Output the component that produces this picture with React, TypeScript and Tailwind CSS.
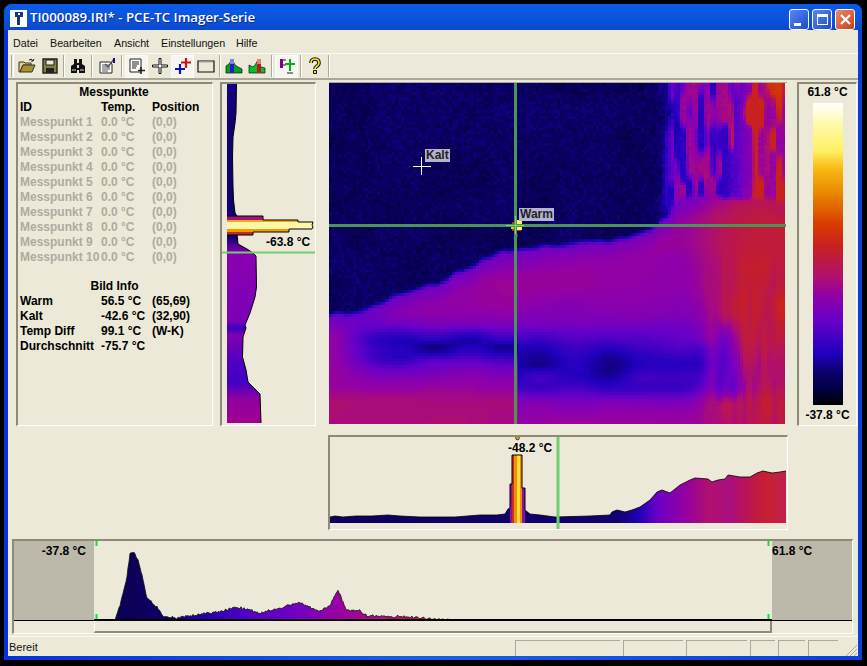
import type { ReactNode } from 'react';

// thermal palette, read off the colour bar (0 = coldest, 1 = hottest)
const STOPS: [number, number, number, number][] = [
  [0, 0, 0, 0],
  [0.05, 0, 0, 40],
  [0.1, 10, 0, 100],
  [0.17, 32, 0, 190],
  [0.28, 104, 0, 200],
  [0.36, 144, 0, 168],
  [0.425, 176, 16, 108],
  [0.525, 200, 32, 32],
  [0.6, 216, 60, 0],
  [0.7, 232, 136, 0],
  [0.78, 248, 184, 16],
  [0.84, 255, 240, 96],
  [0.93, 255, 250, 170],
  [1, 255, 255, 255],
];

function paletteColor(v: number) {
  const t = Math.min(1, Math.max(0, v));
  for (let i = 1; i < STOPS.length; i++) {
    if (t <= STOPS[i][0]) {
      const a = STOPS[i - 1];
      const b = STOPS[i];
      const k = (t - a[0]) / (b[0] - a[0]);
      const c = [1, 2, 3].map((j) => Math.round(a[j] + (b[j] - a[j]) * k));
      return `rgb(${c[0]},${c[1]},${c[2]})`;
    }
  }
  return '#fff';
}

function hash(x: number, y: number) {
  const s = Math.sin(x * 127.1 + y * 311.7) * 43758.5453;
  return s - Math.floor(s);
}

function smooth(a: number, b: number, x: number) {
  const t = Math.min(1, Math.max(0, (x - a) / (b - a)));
  return t * t * (3 - 2 * t);
}

function noise(x: number, y: number) {
  const ix = Math.floor(x);
  const iy = Math.floor(y);
  const fx = smooth(0, 1, x - ix);
  const fy = smooth(0, 1, y - iy);
  const top = hash(ix, iy) * (1 - fx) + hash(ix + 1, iy) * fx;
  const bottom = hash(ix, iy + 1) * (1 - fx) + hash(ix + 1, iy + 1) * fx;
  return top * (1 - fy) + bottom * fy;
}

function interp(points: number[][], x: number) {
  if (x <= points[0][0]) return points[0][1];
  for (let i = 1; i < points.length; i++) {
    if (x <= points[i][0]) {
      const [x0, y0] = points[i - 1];
      const [x1, y1] = points[i];
      return y0 + ((y1 - y0) * (x - x0)) / (x1 - x0);
    }
  }
  return points[points.length - 1][1];
}

const GROUND = [
  [0, 231], [35, 229], [66, 213], [110, 199], [150, 180], [173, 167], [233, 161], [285, 157], [323, 147], [340, 132], [350, 115], [380, 112], [457, 118],
];

function field(x: number, y: number) {
  const edge = interp(GROUND, x) + (noise(x / 9, 3) - 0.5) * 4;
  const sky = 0.095 + (hash(x, y) - 0.5) * 0.03 + (noise(x / 30, y / 30) - 0.5) * 0.02;
  let ground = 0.365 + (noise(x / 60, y / 20) - 0.5) * 0.03;

  // cold band running through the middle of the ground
  const left = x < 190;
  const bandY = left ? 264 : 282;
  const bandH = left ? 22 : 40;
  const bandX = smooth(0, 50, x) * (1 - smooth(365, 400, x));
  ground -= (left ? 0.2 : 0.2) * bandX * Math.exp(-((y - bandY) ** 2) / (bandH * bandH)) * (0.75 + 0.5 * noise(x / 35, y / 14));
  ground -= 0.06 * (1 - smooth(edge, edge + 26, y));
  ground += 0.045 * smooth(300, 320, y);

  // warm wall on the right, hottest around the ledge
  const wall = smooth(345, 425, x) * (1 - 0.6 * smooth(230, 300, y));
  const streak = noise(x / 5, y / 45);
  ground += wall * 0.13 + smooth(370, 400, x) * (streak - 0.5) * 0.09 * smooth(150, 220, y);
  ground -= 0.12 * smooth(382, 392, x) * (1 - smooth(402, 420, x)) * smooth(225, 260, y) * (1 - smooth(305, 325, y));

  let up = sky;
  if (x > 325) {
    const w = smooth(325, 355, x);
    const s = noise(x / 6, y / 28);
    up = sky + w * (0.09 + 0.2 * smooth(0.35, 0.75, s)) + smooth(390, 430, x) * (0.18 + 0.05 * s);
    up = Math.min(up, 0.53);
    up += smooth(425, 450, x) * (1 - smooth(5, 35, y)) * 0.05;
  }

  const mix = smooth(edge - 4, edge + 4, y);
  return up * (1 - mix) + ground * mix;
}

function buildHeatmap() {
  const levels = new Map<string, string[]>();
  for (let py = 0; py < 114; py++) {
    for (let px = 0; px < 152; px++) {
      const v = Math.round(field(px * 3 + 1, py * 3 + 1) * 110) / 110;
      const key = paletteColor(v);
      const list = levels.get(key) ?? [];
      list.push(`M${px * 3} ${py * 3}h3v3h-3z`);
      levels.set(key, list);
    }
  }
  return [...levels.entries()].map(([color, parts]) => ({ color, d: parts.join('') }));
}

const HEATMAP = buildHeatmap();

const toPath = (pts: number[][]) => pts.map((p, i) => `${i ? 'L' : 'M'}${p[0]} ${p[1]}`).join(' ');

// vertical profile, page coordinates
const V_PROFILE = [
  [236.5, 84], [236, 113], [235, 123], [233, 137], [232.5, 157], [233, 187], [233.5, 200], [235, 213], [237, 216], [237, 234], [238, 244], [247, 249], [253, 253], [256, 256], [256.5, 287], [255, 297], [250, 313], [245, 325], [246, 328], [243, 337], [242.5, 357], [246, 370], [248, 382], [260, 394], [261, 423],
];

const H_TOP = [
  [330, 517], [335, 516], [343, 517], [356, 516], [372, 516], [388, 515], [400, 516], [420, 517], [455, 517], [480, 515], [497, 515], [505, 514], [508, 509], [510, 508], [525, 510], [530, 514], [540, 515], [555, 517], [590, 516], [610, 515], [612, 512], [617, 510], [625, 512], [632, 510], [640, 507], [650, 500], [657, 492], [662, 490], [670, 493], [680, 485], [690, 480], [695, 478], [708, 479], [712, 482], [718, 480], [725, 479], [728, 475], [740, 477], [750, 477], [757, 473], [763, 471], [772, 473], [780, 472], [786, 471],
];

function jagged(points: number[][], x0: number, x1: number, amp: number) {
  const out: number[][] = [];
  for (let x = x0; x <= x1; x++) {
    out.push([x, interp(points, x) + (hash(x, 7) - 0.5) * amp * (x < 118 ? 0 : 1)]);
  }
  return out;
}

const HIST = jagged(
  [[115, 620], [120, 605], [127, 577], [130, 553], [134, 553], [138, 560], [142, 575], [147, 598], [157, 607], [163, 616], [177, 618], [200, 614], [220, 612], [237, 607], [250, 610], [260, 613], [283, 607], [300, 603], [320, 611], [330, 605], [338, 590], [346, 610], [360, 611], [367, 616], [387, 616], [390, 617], [400, 616], [430, 619], [450, 620]],
  115,
  450,
  2.4,
);

function Sunken({ className, children }: { className: string; children?: ReactNode }) {
  return (
    <div className={`relative border-t-2 border-l-2 border-r border-b border-t-[#8d8a78] border-l-[#8d8a78] border-r-white border-b-white ${className}`}>
      {children}
    </div>
  );
}

function ToolButton({ pressed, children }: { pressed?: boolean; children: ReactNode }) {
  return (
    <div className={`flex h-[23px] w-[23px] items-center justify-center ${pressed ? 'border border-[#fbfaf5] bg-[#f6f5ef]' : ''}`}>
      <svg width="18" height="18" viewBox="0 0 18 18">{children}</svg>
    </div>
  );
}

const Sep = ({ w = 'w-[7px]' }: { w?: string }) => (
  <div className={`flex h-[22px] justify-center ${w}`}>
    <div className="h-full w-[2px] border-l border-r border-l-[#aca899] border-r-white" />
  </div>
);

const ROWS = ['1', '2', '3', '4', '5', '6', '7', '8', '9', '10'];

const INFO = [
  ['Warm', '56.5 °C', '(65,69)'],
  ['Kalt', '-42.6 °C', '(32,90)'],
  ['Temp Diff', '99.1 °C', '(W-K)'],
  ['Durchschnitt', '-75.7 °C', ''],
];

function Toolbar() {
  return (
    <div className="flex h-[26px] items-center border-b-2 border-b-[#aca899] pl-[3px]">
      <div className="mr-[1px] h-[22px] w-[3px] border-l border-r border-l-[#aca899] border-r-white" />
      <ToolButton>
        <path d="M1 5h5l1 1h6v2H5L2 15H1z" fill="#e8d070" stroke="#333" />
        <path d="M5 8h12l-3 7H2z" fill="#a89030" stroke="#333" />
        <path d="M11 3q3-2 4 1m0 0l-2 0m2 0l1-2" fill="none" stroke="#111" />
      </ToolButton>
      <ToolButton>
        <path d="M2 2h14v14H2z" fill="#808040" stroke="#222" strokeWidth="1.400" />
        <path d="M5 3h8v5H5z" fill="#ece9d8" stroke="#222" />
        <path d="M5 11h8v5H5z" fill="#222" />
      </ToolButton>
      <Sep w="w-[5px]" />
      <ToolButton>
        <path d="M5 2h3v4h2V2h3v5l3 2v7h-6v-3H8v3H2V9l3-2z" fill="#111" />
        <path d="M3 13h4M11 13h4" stroke="#ddd" />
        <path d="M8 8h2v3H8z" fill="#ddd" />
      </ToolButton>
      <Sep w="w-[6px]" />
      <ToolButton>
        <path d="M2 5h10l2 2v9H2z" fill="#fff" stroke="#222" />
        <path d="M4 8h7M4 10h8M4 12h8M4 14h6" stroke="#555" />
        <path d="M7 7l3 3 6-8" fill="none" stroke="#555" strokeWidth="1.400" />
        <path d="M15 1h2v5h-2z" fill="#101080" />
      </ToolButton>
      <Sep />
      <ToolButton pressed>
        <path d="M2 2h11v13H2z" fill="#fff" stroke="#222" />
        <path d="M4 5h7M4 7h7M4 9h5M4 11h4" stroke="#222" />
        <path d="M13 10v7M10 13.500h7" stroke="#222" strokeWidth="1.600" />
      </ToolButton>
      <ToolButton>
        <path d="M8 1.500h2v6.500h6.500v2H10v6.500H8V10H1.500V8H8z" fill="#fff" stroke="#111" strokeWidth="1" />
      </ToolButton>
      <ToolButton pressed>
        <path d="M12 1v10M7 5.500h10" stroke="#d01010" strokeWidth="2.200" />
        <path d="M6 7v10M1 12h10" stroke="#1010b0" strokeWidth="2.200" />
      </ToolButton>
      <ToolButton>
        <path d="M1 4h16v11H1z" fill="#ece9d8" stroke="#111" strokeWidth="1.200" />
        <path d="M2 5h14" stroke="#aaa" />
      </ToolButton>
      <Sep w="w-[5px]" />
      <ToolButton>
        <path d="M1 16V9l3-2 3-5 3 6 3 2 4 2v4z" fill="#00a020" stroke="#111" strokeWidth="0.700" />
        <path d="M5 16V4h4v12z" fill="#2020c0" />
        <path d="M5 2h4v5H5z" fill="#8080d8" />
      </ToolButton>
      <ToolButton>
        <path d="M1 16V8l4 2 2-2 3-5 3 7 4 1v5z" fill="#00c030" stroke="#111" strokeWidth="0.700" />
        <path d="M9 16V4h4v12z" fill="#c01818" />
        <path d="M9 2h4v5H9z" fill="#e08080" />
      </ToolButton>
      <Sep />
      <ToolButton pressed>
        <path d="M2 2h3v9H2z" fill="#800080" />
        <path d="M5 3h3M5 8h3" stroke="#606060" strokeWidth="1.400" />
        <path d="M12 2v12M7 7h10" stroke="#00b020" strokeWidth="2" />
        <path d="M9 15h6v2H9z" fill="#888" />
      </ToolButton>
      <Sep w="w-[5px]" />
      <ToolButton>
        <path d="M5 6q0-4 4-4t4 4q0 2-2.500 3.500Q9 10.500 9 12" fill="none" stroke="#111" strokeWidth="3.600" />
        <path d="M5 6q0-4 4-4t4 4q0 2-2.500 3.500Q9 10.500 9 12" fill="none" stroke="#f8f020" strokeWidth="1.600" />
        <path d="M7.500 13.500h3v3h-3z" fill="#f8f020" stroke="#111" />
      </ToolButton>
      <Sep w="w-[6px]" />
    </div>
  );
}

export default function App() {
  const font = { fontFamily: '"Liberation Sans", Arial, sans-serif' };
  return (
    <div className="h-[666px] w-[867px] overflow-hidden bg-black pl-[4px] pt-[4px] text-black" style={font}>
      <div className="flex h-[656px] w-[858px] flex-col rounded-t-[8px] bg-gradient-to-r from-[#0831d9] via-[#1a5ee8] to-[#0a40d8]">
        {/* title bar */}
        <div className="flex h-[26px] flex-none items-center rounded-t-[8px] bg-gradient-to-b from-[#0a5ae8] via-[#0a55dd] to-[#0a48cc] pl-[6px] pr-[7px]">
          <svg width="17" height="17" viewBox="0 0 17 17" className="mr-[3px] mt-[3px]">
            <path d="M0 0h17v17H0z" fill="#fff" />
            <path d="M5 2h8v5h-3v8H7V7H5z" fill="#123a7a" />
            <path d="M8 3h2v2H8z" fill="#fff" />
          </svg>
          <span className="mt-[1px] flex-1 text-[13.3px] font-semibold text-white [font-family:'Open_Sans',sans-serif] [text-shadow:1px_1px_0_#0a2c90]">
            TI000089.IRI* - PCE-TC Imager-Serie
          </span>
          <div className="mt-[5px] flex gap-[3px]">
            <div className="flex h-[21px] w-[20px] items-end rounded-[3px] border border-white bg-gradient-to-br from-[#5a86ee] to-[#1a4ad0] pb-[3px] pl-[4px]">
              <div className="h-[3px] w-[7px] bg-white" />
            </div>
            <div className="flex h-[21px] w-[20px] items-center justify-center rounded-[3px] border border-white bg-gradient-to-br from-[#5a86ee] to-[#1a4ad0]">
              <div className="h-[11px] w-[11px] border border-t-[3px] border-white" />
            </div>
            <div className="flex h-[21px] w-[20px] items-center justify-center rounded-[3px] border border-white bg-gradient-to-br from-[#e88a68] to-[#c83c14]">
              <svg width="13" height="13" viewBox="0 0 13 13">
                <path d="M2 2l9 9M11 2l-9 9" stroke="#fff" strokeWidth="2.200" />
              </svg>
            </div>
          </div>
        </div>

        {/* client area */}
        <div className="mx-[4px] flex h-[626px] w-[850px] flex-col bg-[#ece9d8]">
          <div className="flex h-[24px] flex-none items-end border-b border-b-[#fbfaf5] pb-[3px] pl-[5px] text-[10.7px] leading-[13px] text-[#111]">
            <span className="w-[37px]">Datei</span>
            <span className="w-[64px]">Bearbeiten</span>
            <span className="w-[47px]">Ansicht</span>
            <span className="w-[75px]">Einstellungen</span>
            <span>Hilfe</span>
          </div>
          <Toolbar />

          <div className="mt-[2px] flex pl-[8px]">
            {/* measuring points */}
            <Sunken className="mr-[7px] h-[344px] w-[197px] pl-[2px] text-[12px] font-bold leading-[15px]">
              <div className="mt-[1px] pr-[4px] text-center">Messpunkte</div>
              <div className="grid grid-cols-[81px_51px_auto]">
                <span>ID</span>
                <span>Temp.</span>
                <span>Position</span>
                {ROWS.map((n) => (
                  <div key={n} className="col-span-3 grid grid-cols-[81px_51px_auto] text-[#aeab9f]">
                    <span className="whitespace-nowrap">Messpunkt {n}</span>
                    <span>0.0 °C</span>
                    <span>(0,0)</span>
                  </div>
                ))}
              </div>
              <div className="mt-[14px] pr-[3px] text-center">Bild Info</div>
              <div className="grid grid-cols-[81px_51px_auto]">
                {INFO.map((row) => row.map((cell, i) => <span key={row[0] + i} className="whitespace-nowrap">{cell}</span>))}
              </div>
            </Sunken>

            {/* vertical profile */}
            <Sunken className="mr-[13px] h-[344px] w-[96px]">
              <svg width="93" height="341" viewBox="222 84 93 341" className="block">
                <defs>
                  <linearGradient id="vp" gradientUnits="userSpaceOnUse" x1="0" y1="84" x2="0" y2="423">
                    <stop offset="0" stopColor="#180088" />
                    <stop offset="0.1" stopColor="#100070" />
                    <stop offset="0.45" stopColor="#100070" />
                    <stop offset="0.5" stopColor="#8a00b0" />
                    <stop offset="0.7" stopColor="#7c00b8" />
                    <stop offset="0.72" stopColor="#3a00c0" />
                    <stop offset="0.74" stopColor="#8000b0" />
                    <stop offset="0.82" stopColor="#5000c0" />
                    <stop offset="0.88" stopColor="#4000c4" />
                    <stop offset="0.93" stopColor="#9000a0" />
                    <stop offset="1" stopColor="#a00090" />
                  </linearGradient>
                </defs>
                <path d={`M227 84L${toPath(V_PROFILE).slice(1)}L227 423Z`} fill="url(#vp)" />
                <path d={toPath(V_PROFILE)} fill="none" stroke="#000" />
                <path d="M227 216h36v4h-36z" fill="#a01478" />
                <path d="M227 220h71v2h-71z" fill="#f0a818" />
                <path d="M227 222h86v7h-86z" fill="#fff6a8" />
                <path d="M227 229h62v3h-62z" fill="#f09c00" />
                <path d="M227 232h26v3h-26z" fill="#c82828" />
                <path d="M227 216h36v4h35v2h15l-1 3 1 2-1 2h-23v3h-36v3h-26" fill="none" stroke="#000" />
                <path d="M222 252.500h93" stroke="#6fce6f" strokeWidth="2" />
              </svg>
              <span className="absolute left-[44px] top-[151px] text-[12px] font-bold leading-[14px]">-63.8 °C</span>
            </Sunken>

            {/* thermal image */}
            <div className="relative mr-[10px] h-[343px] w-[458px] overflow-hidden border-t border-t-[#aca899]">
              <svg width="457" height="341" viewBox="0 0 457 341" shapeRendering="crispEdges" className="block">
                {HEATMAP.map((l) => (
                  <path key={l.color} d={l.d} fill={l.color} />
                ))}
                <path d="M183 139h9v9h-9z" fill="#c03020" />
                <path d="M186 137h7v10h-7z" fill="#fff070" />
                <path d="M182 143h6v3h-6z" fill="#e8c020" />
                <path d="M186 151h3v3h-3z" fill="#8a10a0" />
                <path d="M0 142.500h457M186.500 0v341" stroke="#4a9456" strokeWidth="3" />
                <path d="M177 142.500h18M186.500 133v18" stroke="#6ee060" strokeWidth="1" />
                <path d="M83.500 83.500h18M92.500 74v18" stroke="#fff" strokeWidth="1" />
              </svg>
              <span className="absolute left-[96px] top-[66px] h-[13px] bg-[#b4b4c8] px-[1px] text-[12px] font-bold leading-[13px] text-[#222]">Kalt</span>
              <span className="absolute left-[190px] top-[125px] h-[13px] bg-[#b4b4d0] px-[1px] text-[12px] font-bold leading-[13px] text-[#222]">Warm</span>
            </div>

            {/* colour scale */}
            <Sunken className="flex h-[344px] w-[60px] flex-col items-center text-[12px] font-bold">
              <span className="h-[19px] leading-[17px]">61.8 °C</span>
              <div className="h-[302px] w-[30px] bg-[linear-gradient(to_top,#000_0%,#000040_5%,#0a0064_10%,#2000be_17%,#6800c8_28%,#9000a8_36%,#b0106c_42.5%,#c82020_52.5%,#d83c00_60%,#e88800_70%,#f8b810_78%,#fff060_84%,#fffaaa_93%,#fff_100%)]" />
              <span className="mt-[3px] leading-[15px]">-37.8 °C</span>
            </Sunken>
          </div>

          {/* horizontal profile */}
          <Sunken className="ml-[320px] mt-[9px] h-[95px] w-[460px]">
            <svg width="457" height="92" viewBox="330 437 457 92" className="block">
              <defs>
                <linearGradient id="hp" gradientUnits="userSpaceOnUse" x1="330" y1="0" x2="786" y2="0">
                  <stop offset="0" stopColor="#0c0060" />
                  <stop offset="0.63" stopColor="#100070" />
                  <stop offset="0.68" stopColor="#2400b8" />
                  <stop offset="0.72" stopColor="#6c00c4" />
                  <stop offset="0.78" stopColor="#9400a0" />
                  <stop offset="0.83" stopColor="#b01070" />
                  <stop offset="0.88" stopColor="#a81080" />
                  <stop offset="0.9" stopColor="#b81060" />
                  <stop offset="0.96" stopColor="#c82030" />
                  <stop offset="1" stopColor="#c02050" />
                </linearGradient>
              </defs>
              <path d={`${toPath(H_TOP)}L786 523L330 523Z`} fill="url(#hp)" />
              <path d={toPath(H_TOP)} fill="none" stroke="#000" strokeWidth="0.800" />
              <path d="M510 484h2v39h-2z" fill="#901090" />
              <path d="M512 455h2v68h-2z" fill="#c83020" />
              <path d="M514 455h3v68h-3z" fill="#f09000" />
              <path d="M517 455h3v68h-3z" fill="#ffdc40" />
              <path d="M520 455h2v68h-2z" fill="#f09000" />
              <path d="M522 488h3v35h-3z" fill="#8a10a0" />
              <path d="M510 508v-24h2v-29h10v33h3v22" fill="none" stroke="#000" />
              <circle cx="517.500" cy="438" r="1.800" fill="#f0b000" stroke="#000" strokeWidth="0.700" />
              <path d="M558 437v92" stroke="#6fce6f" strokeWidth="3" />
            </svg>
            <span className="absolute left-[178px] top-[4px] text-[12px] font-bold leading-[14px]">-48.2 °C</span>
          </Sunken>

          {/* histogram */}
          <Sunken className="ml-[4px] mt-[9px] h-[95px] w-[841px]">
            <div className="flex h-[80px] border-b border-b-black">
              <div className="w-[80px] bg-[#bcb9ab] pr-[8px] pt-[3px] text-right text-[12px] font-bold leading-[14px]">-37.8 °C</div>
              <div className="relative w-[678px]">
                <svg width="678" height="79" viewBox="94 541 678 79" className="block">
                  <defs>
                    <linearGradient id="hg" gradientUnits="userSpaceOnUse" x1="115" y1="0" x2="440" y2="0">
                      <stop offset="0" stopColor="#080050" />
                      <stop offset="0.15" stopColor="#100068" />
                      <stop offset="0.25" stopColor="#1c00a8" />
                      <stop offset="0.4" stopColor="#5000c8" />
                      <stop offset="0.55" stopColor="#7000c4" />
                      <stop offset="0.7" stopColor="#9c00a0" />
                      <stop offset="0.8" stopColor="#a80c88" />
                      <stop offset="0.9" stopColor="#b01060" />
                      <stop offset="1" stopColor="#c02040" />
                    </linearGradient>
                  </defs>
                  <path d={`${toPath(HIST)}L450 620L115 620Z`} fill="url(#hg)" stroke="#111" strokeWidth="0.800" />
                  <path d="M94 619.500h678" stroke="#000" strokeWidth="1" />
                  <path d="M96.500 541v5M96.500 614v5M768.500 541v5M768.500 614v5" stroke="#10e030" strokeWidth="2" />
                </svg>
              </div>
              <div className="flex-1 bg-[#bcb9ab] pt-[3px] text-[12px] font-bold leading-[14px]">61.8 °C</div>
            </div>
            <div className="flex h-[12px]">
              <div className="w-[80px]" />
              <div className="w-[678px] border-l border-b-2 border-l-white border-b-[#8d8a78] border-r-2 border-r-[#8d8a78]" />
            </div>
          </Sunken>

          {/* status bar */}
          <div className="mt-[2px] flex h-[20px] items-end border-t border-t-[#fbfaf5] pl-[1px] text-[11px] leading-[16px] text-[#111]">
            <span className="mb-[1px] flex-1">Bereit</span>
            <div className="flex gap-[3px]">
              <div className="h-[16px] w-[105px] border-t border-l border-[#aca899]" />
              <div className="h-[16px] w-[60px] border-t border-l border-[#aca899]" />
              <div className="h-[16px] w-[61px] border-t border-l border-[#aca899]" />
              <div className="h-[16px] w-[25px] border-t border-l border-[#aca899]" />
              <div className="h-[16px] w-[27px] border-t border-l border-[#aca899]" />
              <div className="h-[16px] w-[30px] border-t border-l border-[#aca899]" />
            </div>
            <svg width="20" height="14" viewBox="0 0 20 14" className="flex-none">
              <path d="M8 14L19 3M12 14l7-7M16 14l3-3" stroke="#aca899" />
            </svg>
          </div>
        </div>
      </div>
    </div>
  );
}
